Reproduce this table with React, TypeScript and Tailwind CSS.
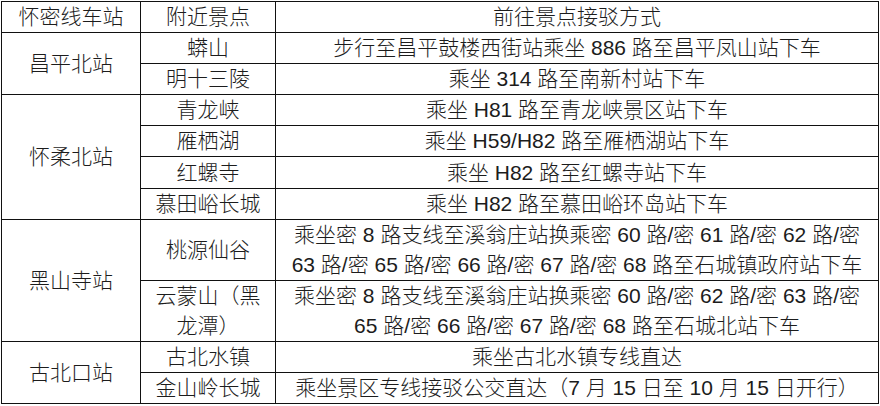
import React from "react";

const F = { fontFamily: '"Liberation Sans", "Noto Sans CJK SC", sans-serif' };

const td = "border border-[#111] text-center align-middle p-0 leading-[30px]";

export default function App() {
  return (
    <div className="w-[880px] h-[406px] bg-white pt-px pl-px">
      <table
        className="border-collapse table-fixed w-[877px] text-[21px] font-light text-[#1c1c1c]"
        style={F}
      >
        <colgroup>
          <col className="w-[139px]" />
          <col className="w-[135px]" />
          <col className="w-[603px]" />
        </colgroup>
        <tbody>
          <tr className="h-[31px]">
            <td className={td}>怀密线车站</td>
            <td className={td}>附近景点</td>
            <td className={td}>前往景点接驳方式</td>
          </tr>
          <tr className="h-[31px]">
            <td className={td} rowSpan={2}>昌平北站</td>
            <td className={td}>蟒山</td>
            <td className={td}>步行至昌平鼓楼西街站乘坐 886 路至昌平凤山站下车</td>
          </tr>
          <tr className="h-[31px]">
            <td className={td}>明十三陵</td>
            <td className={td}>乘坐 314 路至南新村站下车</td>
          </tr>
          <tr className="h-[31px]">
            <td className={td} rowSpan={4}>怀柔北站</td>
            <td className={td}>青龙峡</td>
            <td className={td}>乘坐 H81 路至青龙峡景区站下车</td>
          </tr>
          <tr className="h-[31px]">
            <td className={td}>雁栖湖</td>
            <td className={td}>乘坐 H59/H82 路至雁栖湖站下车</td>
          </tr>
          <tr className="h-[32px]">
            <td className={td}>红螺寺</td>
            <td className={td}>乘坐 H82 路至红螺寺站下车</td>
          </tr>
          <tr className="h-[31px]">
            <td className={td}>慕田峪长城</td>
            <td className={td}>乘坐 H82 路至慕田峪环岛站下车</td>
          </tr>
          <tr className="h-[61px]">
            <td className={td} rowSpan={2}>黑山寺站</td>
            <td className={td}>桃源仙谷</td>
            <td className={td}>
              乘坐密 8 路支线至溪翁庄站换乘密 60 路/密 61 路/密 62 路/密
              <br />
              63 路/密 65 路/密 66 路/密 67 路/密 68 路至石城镇政府站下车
            </td>
          </tr>
          <tr className="h-[61px]">
            <td className={td}>
              云蒙山（黑
              <br />
              龙潭）
            </td>
            <td className={td}>
              乘坐密 8 路支线至溪翁庄站换乘密 60 路/密 62 路/密 63 路/密
              <br />
              65 路/密 66 路/密 67 路/密 68 路至石城北站下车
            </td>
          </tr>
          <tr className="h-[31px]">
            <td className={td} rowSpan={2}>古北口站</td>
            <td className={td}>古北水镇</td>
            <td className={td}>乘坐古北水镇专线直达</td>
          </tr>
          <tr className="h-[31px]">
            <td className={td}>金山岭长城</td>
            <td className={td}>乘坐景区专线接驳公交直达（7 月 15 日至 10 月 15 日开行）</td>
          </tr>
        </tbody>
      </table>
    </div>
  );
}
